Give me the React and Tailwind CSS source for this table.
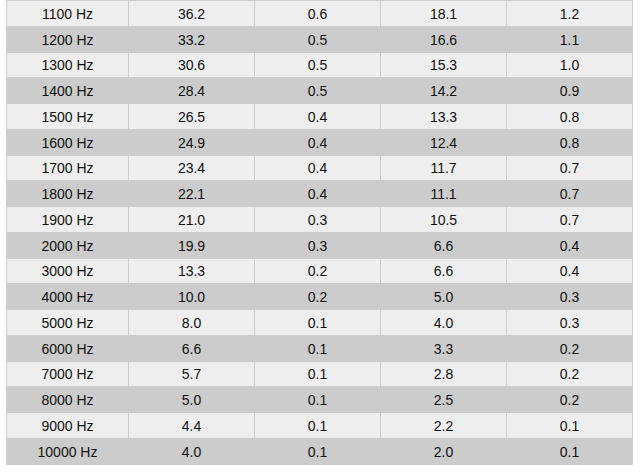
const rows = [
  ["1100 Hz", "36.2", "0.6", "18.1", "1.2"],
  ["1200 Hz", "33.2", "0.5", "16.6", "1.1"],
  ["1300 Hz", "30.6", "0.5", "15.3", "1.0"],
  ["1400 Hz", "28.4", "0.5", "14.2", "0.9"],
  ["1500 Hz", "26.5", "0.4", "13.3", "0.8"],
  ["1600 Hz", "24.9", "0.4", "12.4", "0.8"],
  ["1700 Hz", "23.4", "0.4", "11.7", "0.7"],
  ["1800 Hz", "22.1", "0.4", "11.1", "0.7"],
  ["1900 Hz", "21.0", "0.3", "10.5", "0.7"],
  ["2000 Hz", "19.9", "0.3", "6.6", "0.4"],
  ["3000 Hz", "13.3", "0.2", "6.6", "0.4"],
  ["4000 Hz", "10.0", "0.2", "5.0", "0.3"],
  ["5000 Hz", "8.0", "0.1", "4.0", "0.3"],
  ["6000 Hz", "6.6", "0.1", "3.3", "0.2"],
  ["7000 Hz", "5.7", "0.1", "2.8", "0.2"],
  ["8000 Hz", "5.0", "0.1", "2.5", "0.2"],
  ["9000 Hz", "4.4", "0.1", "2.2", "0.1"],
  ["10000 Hz", "4.0", "0.1", "2.0", "0.1"],
];

export default function App() {
  return (
    <div className="min-h-screen bg-white pl-[6px] font-['Liberation_Sans',Arial,sans-serif] text-[14px] text-[#111]">
      <div className="w-[627px] border-b border-[#ccc]">
        {rows.map((row, i) => (
          <div
            key={i}
            className={`flex h-[25.76px] border-t border-[#ccc] ${i % 2 === 0 ? "bg-[#eee]" : "bg-[#ccc]"}`}
          >
            <div className="flex w-[122px] items-center justify-center border-l border-[#ccc] pt-[2px]">{row[0]}</div>
            <div className="flex w-[126px] items-center justify-center border-l border-[#ccc] pt-[2px]">{row[1]}</div>
            <div className="flex w-[126px] items-center justify-center border-l border-[#ccc] pt-[2px]">{row[2]}</div>
            <div className="flex w-[126px] items-center justify-center border-l border-[#ccc] pt-[2px]">{row[3]}</div>
            <div className="flex w-[127px] items-center justify-center border-x border-[#ccc] pt-[2px]">{row[4]}</div>
          </div>
        ))}
      </div>
    </div>
  );
}
